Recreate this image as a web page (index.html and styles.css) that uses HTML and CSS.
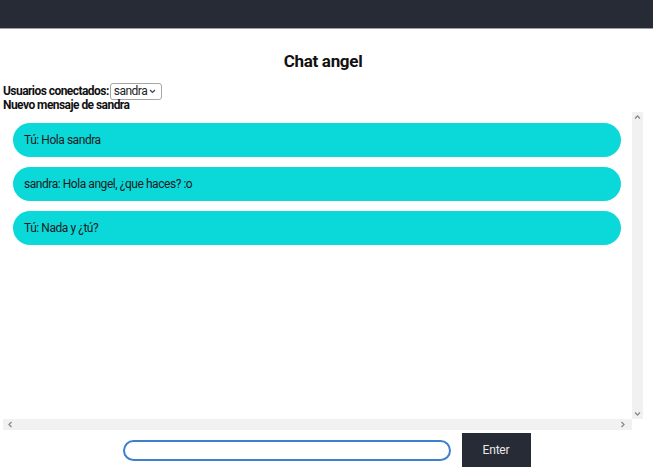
FILE: index.html
```html
<!DOCTYPE html>
<html lang="es">
<head>
<meta charset="utf-8">
<title>Chat angel</title>
<link rel="stylesheet" href="styles.css">
</head>
<body>
<header class="topbar"></header>
<main class="page">
  <h2 class="title">Chat angel</h2>
  <div class="users">
    <label class="label" for="users">Usuarios conectados:</label><select id="users" class="select"><option>sandra</option></select>
  </div>
  <div class="notice">Nuevo mensaje de sandra</div>
  <div class="chatbox">
    <div class="messages">
      <div class="bubble">Tú: Hola sandra</div>
      <div class="bubble">sandra: Hola angel, ¿que haces? :o</div>
      <div class="bubble">Tú: Nada y ¿tú?</div>
    </div>
    <div class="vbar">
      <svg class="arrow" width="11" height="11" viewBox="0 0 11 11"><path d="M3 6.5 L5.5 4 L8 6.5" fill="none" stroke="#8a8a8a" stroke-width="1.3"/></svg>
      <svg class="arrow" width="11" height="11" viewBox="0 0 11 11"><path d="M3 4.5 L5.5 7 L8 4.5" fill="none" stroke="#8a8a8a" stroke-width="1.3"/></svg>
    </div>
    <div class="hbar">
      <svg class="arrow" width="11" height="11" viewBox="0 0 11 11"><path d="M6.5 3 L4 5.5 L6.5 8" fill="none" stroke="#8a8a8a" stroke-width="1.3"/></svg>
      <svg class="arrow" width="11" height="11" viewBox="0 0 11 11"><path d="M4.5 3 L7 5.5 L4.5 8" fill="none" stroke="#8a8a8a" stroke-width="1.3"/></svg>
    </div>
    <div class="corner"></div>
  </div>
  <form class="composer">
    <input class="input" type="text">
    <button class="send" type="button">Enter</button>
  </form>
</main>
</body>
</html>
```
FILE: styles.css
```css
* { box-sizing: border-box; }
html, body { margin: 0; padding: 0; background: #fff; }
body { font-family: Roboto, "Noto Sans", sans-serif; color: #111; }

.topbar { height: 29px; background: #272b36; border-bottom: 1px solid #9aa0aa; }

.page { padding: 0 10px 0 3px; }

.title {
  margin: 20px 0 0;
  height: 24px;
  line-height: 24px;
  text-align: center;
  font-size: 17px;
  font-weight: 700;
  letter-spacing: -0.3px;
}

.users {
  margin-top: 10px;
  display: flex;
  align-items: center;
  height: 16px;
}
.label { font-size: 12px; font-weight: 700; letter-spacing: -0.55px; }
.select {
  -webkit-appearance: none;
  appearance: none;
  font-family: Roboto, sans-serif;
  font-size: 12px;
  width: 52px;
  height: 17px;
  padding: 0 0 0 3px;
  margin-left: 1px;
  border: 1px solid #a6a6a6;
  border-radius: 3px;
  background: #fff url("data:image/svg+xml,%3Csvg xmlns='http://www.w3.org/2000/svg' width='7' height='5'%3E%3Cpath d='M1 1 L3.5 3.5 L6 1' fill='none' stroke='%23444' stroke-width='1.2'/%3E%3C/svg%3E") no-repeat right 5px center;
  color: #222;
  letter-spacing: -0.5px;
}
.notice { font-size: 12px; font-weight: 700; letter-spacing: -0.55px; height: 13px; line-height: 13px; }

.chatbox {
  width: 640px;
  height: 318px;
  display: grid;
  grid-template-columns: 629px 11px;
  grid-template-rows: 307px 11px;
}
.messages {
  overflow: hidden;
  padding: 11px 0 0 10px;
}
.vbar {
  background: #f1f1f1;
  display: flex;
  flex-direction: column;
  justify-content: space-between;
}
.hbar {
  background: #f1f1f1;
  display: flex;
  justify-content: space-between;
  padding: 0 4px 0 2px;
}
.corner { background: #fff; }
.arrow { display: block; }

.bubble {
  width: 608px;
  height: 34px;
  margin-bottom: 10px;
  padding-left: 11px;
  display: flex;
  align-items: center;
  background: #0bd8d8;
  border-radius: 17px;
  font-size: 12px;
  letter-spacing: -0.45px;
  color: #1b1b1b;
}

.composer {
  margin-top: 3px;
  display: flex;
  justify-content: center;
  align-items: center;
  gap: 11px;
  padding-left: 7px;
}
.input {
  width: 328px;
  height: 21px;
  border: 2px solid #3f7fd0;
  border-radius: 11px;
  background: #fff;
  outline: none;
}
.send {
  width: 69px;
  height: 34px;
  border: none;
  background: #272b36;
  color: #e8e8e8;
  font-family: Roboto, sans-serif;
  font-size: 12px;
  letter-spacing: -0.2px;
}
```
